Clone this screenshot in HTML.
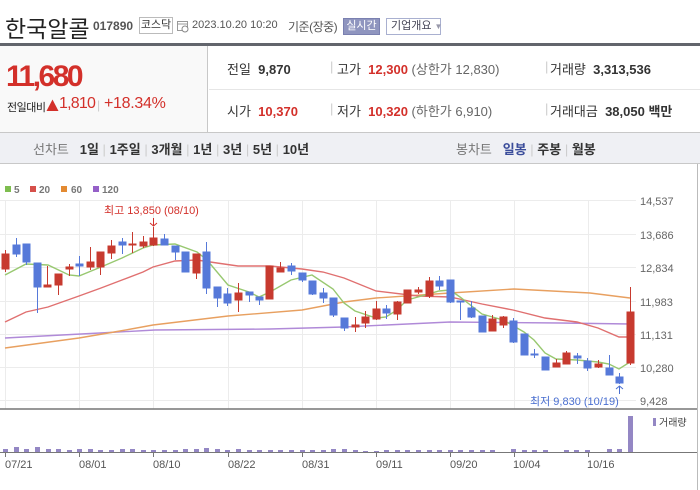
<!DOCTYPE html>
<html><head><meta charset="utf-8"><style>
*{margin:0;padding:0;box-sizing:border-box}
body{width:700px;height:490px;background:#fff;font-family:"Liberation Sans","Noto Sans CJK KR",sans-serif;position:relative;overflow:hidden;color:#333}
.a{position:absolute;white-space:nowrap}
.red{color:#d3302a}
.b{font-weight:bold}
</style></head><body>
<div class="a" style="left:5px;top:10px;font-size:23px;color:#222;letter-spacing:0px">한국알콜</div>
<div class="a b" style="left:93px;top:19px;font-size:12px;color:#555">017890</div>
<div class="a" style="left:139px;top:17px;width:34px;height:17px;border:1px solid #bbb;font-size:11px;color:#333;text-align:center;line-height:15px">코스닥</div>
<svg class="a" style="left:177px;top:19px" width="12" height="14"><rect x="0.5" y="2.5" width="10" height="9" fill="none" stroke="#999"/><line x1="0" y1="5" x2="11" y2="5" stroke="#999"/><circle cx="8" cy="10" r="3" fill="#fff" stroke="#888"/></svg>
<div class="a" style="left:192px;top:19px;font-size:11px;color:#555">2023.10.20 10:20</div>
<div class="a" style="left:288px;top:18px;font-size:12px;color:#555;letter-spacing:-0.5px">기준(장중)</div>
<div class="a" style="left:343px;top:18px;width:37px;height:17px;background:#8f95bf;border:1px solid #7a80b0;color:#fff;font-size:11px;text-align:center;line-height:15px">실시간</div>
<div class="a" style="left:386px;top:18px;width:55px;height:17px;border:1px solid #a9b0d0;color:#445;font-size:11px;line-height:15px;padding-left:4px">기업개요 <span style="color:#99a;font-size:8px">▼</span></div>
<div class="a" style="left:0;top:43px;width:700px;height:3px;background:#62656c"></div>
<div class="a" style="left:0;top:46px;width:208px;height:86px;background:#f9f9f9;border-right:1px solid #c8c8c8"></div>
<div class="a" style="left:209px;top:89px;width:491px;height:1px;background:#e6e6e6"></div>
<div class="a b red" style="left:6px;top:60px;font-size:30px;letter-spacing:-2.5px">11,680</div>
<div class="a" style="left:7px;top:99px;font-size:11px;color:#222;letter-spacing:-0.5px">전일대비</div>
<svg class="a" style="left:46px;top:99px" width="13" height="13"><polygon points="6.5,0.5 12.5,12 0.5,12" fill="#d3302a"/></svg>
<div class="a red" style="left:59px;top:95px;font-size:16px;letter-spacing:-0.8px">1,810</div>
<div class="a" style="left:97px;top:98px;font-size:12px;color:#ccc">|</div>
<div class="a red" style="left:104px;top:95px;font-size:16px;letter-spacing:-0.3px">+18.34%</div>
<div class="a" style="left:227px;top:59px;font-size:13px;color:#333">전일 &nbsp;<b>9,870</b></div>
<div class="a" style="left:330px;top:59px;font-size:13px;color:#ccc">|</div>
<div class="a" style="left:337px;top:59px;font-size:13px;color:#333">고가 &nbsp;<b class="red">12,300</b> <span style="color:#666">(상한가 12,830)</span></div>
<div class="a" style="left:545px;top:59px;font-size:13px;color:#ccc">|</div>
<div class="a" style="left:550px;top:59px;font-size:13px;color:#333">거래량 &nbsp;<b>3,313,536</b></div>
<div class="a" style="left:227px;top:101px;font-size:13px;color:#333">시가 &nbsp;<b class="red">10,370</b></div>
<div class="a" style="left:330px;top:101px;font-size:13px;color:#ccc">|</div>
<div class="a" style="left:337px;top:101px;font-size:13px;color:#333">저가 &nbsp;<b class="red">10,320</b> <span style="color:#666">(하한가 6,910)</span></div>
<div class="a" style="left:545px;top:101px;font-size:13px;color:#ccc">|</div>
<div class="a" style="left:550px;top:101px;font-size:13px;color:#333">거래대금 &nbsp;<b>38,050</b> <b>백만</b></div>
<div class="a" style="left:0;top:132px;width:700px;height:32px;background:#eff0f4;border-top:1px solid #c8c8c8;border-bottom:1px solid #c8c8c8"></div>
<div class="a" style="left:33px;top:139px;font-size:13px;color:#777">선차트 &nbsp;&nbsp;<b style="color:#333">1일</b> <span style="color:#ccc">|</span> <b style="color:#333">1주일</b> <span style="color:#ccc">|</span> <b style="color:#333">3개월</b> <span style="color:#ccc">|</span> <b style="color:#333">1년</b> <span style="color:#ccc">|</span> <b style="color:#333">3년</b> <span style="color:#ccc">|</span> <b style="color:#333">5년</b> <span style="color:#ccc">|</span> <b style="color:#333">10년</b></div>
<div class="a" style="left:456px;top:139px;font-size:13px;color:#777">봉차트 &nbsp;&nbsp;<b style="color:#3a4c9a">일봉</b> <span style="color:#ccc">|</span> <b style="color:#333">주봉</b> <span style="color:#ccc">|</span> <b style="color:#333">월봉</b></div>
<div class="a" style="left:697px;top:164px;width:1px;height:326px;background:#bbb"></div>
<svg class="a" style="left:0;top:164px" width="697" height="326" viewBox="0 164 697 326" font-family="Liberation Sans,Noto Sans CJK KR,sans-serif">
<g font-size="10" font-weight="bold" fill="#777">
<rect x="5" y="186" width="6" height="6" fill="#7ebd4f"/><text x="14" y="193">5</text>
<rect x="30" y="186" width="6" height="6" fill="#d6504a"/><text x="39" y="193">20</text>
<rect x="61" y="186" width="6" height="6" fill="#e38a32"/><text x="71" y="193">60</text>
<rect x="93" y="186" width="6" height="6" fill="#9560c8"/><text x="102" y="193">120</text>
</g>
<g stroke="#ececec" stroke-width="1">
<line x1="0" y1="200.5" x2="636" y2="200.5"/><line x1="0" y1="234.5" x2="636" y2="234.5"/><line x1="0" y1="267.5" x2="636" y2="267.5"/><line x1="0" y1="301.5" x2="636" y2="301.5"/><line x1="0" y1="334.5" x2="636" y2="334.5"/><line x1="0" y1="367.5" x2="636" y2="367.5"/><line x1="0" y1="400.5" x2="636" y2="400.5"/>
<line x1="5.5" y1="200" x2="5.5" y2="409"/><line x1="79.5" y1="200" x2="79.5" y2="409"/><line x1="153.5" y1="200" x2="153.5" y2="409"/><line x1="228.5" y1="200" x2="228.5" y2="409"/><line x1="302.5" y1="200" x2="302.5" y2="409"/><line x1="376.5" y1="200" x2="376.5" y2="409"/><line x1="450.5" y1="200" x2="450.5" y2="409"/><line x1="514.5" y1="200" x2="514.5" y2="409"/><line x1="588.5" y1="200" x2="588.5" y2="409"/>
</g>
<g font-size="11" fill="#666">
<text x="640" y="205">14,537</text><text x="640" y="239">13,686</text><text x="640" y="272">12,834</text><text x="640" y="306">11,983</text><text x="640" y="339">11,131</text><text x="640" y="372">10,280</text><text x="640" y="405">9,428</text>
</g>
<g fill="none" stroke-width="1.4">
<polyline stroke="#b08ad8" points="5,338 100,333 155,330 270,329 344,327 450,322 560,323 630,324"/>
<polyline stroke="#e8a060" points="5,348 79,338 120,331 153,325 228,316 302,310 344,302 376,298 450,293 514,289 590,293 630,298"/>
<polyline stroke="#e07070" points="5,322 26,312 48,307 79,296 101,288 122,280 143,272 153,267 175,261 197,260 217,263 238,266 270,266 302,269 323,272 344,278 376,291 418,296 450,297 482,304 513,310 545,318 577,322 598,328 619,337 630,337"/>
<polyline stroke="#98c870" points="5,275 26,264 48,265 69,275 79,276 101,267 122,258 143,248 153,245 175,244 197,252 207,260 228,285 249,292 259,297 270,292 291,280 312,275 333,289 344,303 355,311 376,318 386,317 397,310 407,300 418,297 439,291 450,290 460,297 482,314 503,320 524,332 534,340 545,353 556,359 577,360 598,362 609,364 619,369 630,362"/>
</g>
<g stroke-width="1">
<g stroke="#c73a2f" fill="#c73a2f">
<line x1="5.5" y1="250" x2="5.5" y2="272"/><rect x="2" y="254" width="7" height="15"/>
<line x1="47.5" y1="266" x2="47.5" y2="287"/><rect x="44" y="285" width="7" height="2"/>
<line x1="58.5" y1="274" x2="58.5" y2="295"/><rect x="55" y="274" width="7" height="11"/>
<line x1="69.5" y1="264" x2="69.5" y2="276"/><rect x="66" y="267" width="7" height="2"/>
<line x1="90.5" y1="247" x2="90.5" y2="270"/><rect x="87" y="262" width="7" height="5"/>
<line x1="100.5" y1="252" x2="100.5" y2="275"/><rect x="97" y="252" width="7" height="15"/>
<line x1="111.5" y1="240" x2="111.5" y2="259"/><rect x="108" y="246" width="7" height="7"/>
<line x1="132.5" y1="232" x2="132.5" y2="253"/><rect x="129" y="244" width="7" height="1"/>
<line x1="143.5" y1="236" x2="143.5" y2="248"/><rect x="140" y="242" width="7" height="4"/>
<line x1="153.5" y1="227" x2="153.5" y2="246"/><rect x="150" y="238" width="7" height="7"/>
<line x1="196.5" y1="254" x2="196.5" y2="279"/><rect x="193" y="254" width="7" height="19"/>
<line x1="238.5" y1="283" x2="238.5" y2="312"/><rect x="235" y="293" width="7" height="7"/>
<rect x="266" y="266" width="7" height="33"/>
<line x1="280.5" y1="262" x2="280.5" y2="272"/><rect x="277" y="268" width="7" height="4"/>
<line x1="355.5" y1="317" x2="355.5" y2="332"/><rect x="352" y="325" width="7" height="2"/>
<line x1="365.5" y1="311" x2="365.5" y2="328"/><rect x="362" y="317" width="7" height="6"/>
<line x1="376.5" y1="301" x2="376.5" y2="320"/><rect x="373" y="309" width="7" height="10"/>
<line x1="397.5" y1="301" x2="397.5" y2="320"/><rect x="394" y="302" width="7" height="12"/>
<line x1="407.5" y1="290" x2="407.5" y2="303"/><rect x="404" y="290" width="7" height="13"/>
<line x1="418.5" y1="287" x2="418.5" y2="294"/><rect x="415" y="290" width="7" height="2"/>
<line x1="429.5" y1="277" x2="429.5" y2="298"/><rect x="426" y="281" width="7" height="15"/>
<line x1="492.5" y1="315" x2="492.5" y2="331"/><rect x="489" y="319" width="7" height="12"/>
<line x1="503.5" y1="316" x2="503.5" y2="328"/><rect x="500" y="317" width="7" height="8"/>
<line x1="556.5" y1="359" x2="556.5" y2="367"/><rect x="553" y="363" width="7" height="4"/>
<line x1="566.5" y1="351" x2="566.5" y2="364"/><rect x="563" y="353" width="7" height="11"/>
<line x1="598.5" y1="360" x2="598.5" y2="368"/><rect x="595" y="364" width="7" height="3"/>
<line x1="630.5" y1="287" x2="630.5" y2="365"/><rect x="627" y="312" width="7" height="51"/>
</g>
<g stroke="#5679d9" fill="#5679d9">
<line x1="16.5" y1="238" x2="16.5" y2="257"/><rect x="13" y="245" width="7" height="9"/>
<line x1="26.5" y1="244" x2="26.5" y2="265"/><rect x="23" y="244" width="7" height="18"/>
<line x1="37.5" y1="263" x2="37.5" y2="313"/><rect x="34" y="263" width="7" height="24"/>
<line x1="79.5" y1="256" x2="79.5" y2="276"/><rect x="76" y="264" width="7" height="2"/>
<line x1="122.5" y1="238" x2="122.5" y2="254"/><rect x="119" y="242" width="7" height="3"/>
<line x1="164.5" y1="234" x2="164.5" y2="245"/><rect x="161" y="239" width="7" height="6"/>
<line x1="175.5" y1="246" x2="175.5" y2="260"/><rect x="172" y="246" width="7" height="6"/>
<rect x="182" y="252" width="7" height="20"/>
<line x1="206.5" y1="242" x2="206.5" y2="294"/><rect x="203" y="252" width="7" height="36"/>
<line x1="217.5" y1="287" x2="217.5" y2="307"/><rect x="214" y="287" width="7" height="11"/>
<line x1="227.5" y1="288" x2="227.5" y2="306"/><rect x="224" y="294" width="7" height="9"/>
<line x1="249.5" y1="292" x2="249.5" y2="302"/><rect x="246" y="292" width="7" height="3"/>
<line x1="259.5" y1="297" x2="259.5" y2="305"/><rect x="256" y="297" width="7" height="3"/>
<line x1="291.5" y1="263" x2="291.5" y2="275"/><rect x="288" y="266" width="7" height="5"/>
<line x1="302.5" y1="273" x2="302.5" y2="282"/><rect x="299" y="273" width="7" height="7"/>
<line x1="312.5" y1="281" x2="312.5" y2="295"/><rect x="309" y="281" width="7" height="13"/>
<line x1="323.5" y1="288" x2="323.5" y2="303"/><rect x="320" y="293" width="7" height="5"/>
<line x1="333.5" y1="298" x2="333.5" y2="317"/><rect x="330" y="298" width="7" height="17"/>
<line x1="344.5" y1="318" x2="344.5" y2="331"/><rect x="341" y="318" width="7" height="10"/>
<line x1="386.5" y1="305" x2="386.5" y2="319"/><rect x="383" y="309" width="7" height="4"/>
<line x1="439.5" y1="276" x2="439.5" y2="290"/><rect x="436" y="281" width="7" height="5"/>
<line x1="450.5" y1="280" x2="450.5" y2="303"/><rect x="447" y="280" width="7" height="22"/>
<line x1="460.5" y1="301" x2="460.5" y2="320"/><rect x="457" y="301" width="7" height="1"/>
<line x1="471.5" y1="301" x2="471.5" y2="318"/><rect x="468" y="308" width="7" height="9"/>
<rect x="479" y="316" width="7" height="16"/>
<line x1="513.5" y1="318" x2="513.5" y2="343"/><rect x="510" y="321" width="7" height="21"/>
<rect x="521" y="334" width="7" height="21"/>
<line x1="534.5" y1="349" x2="534.5" y2="358"/><rect x="531" y="354" width="7" height="1"/>
<rect x="542" y="357" width="7" height="13"/>
<line x1="577.5" y1="353" x2="577.5" y2="364"/><rect x="574" y="356" width="7" height="2"/>
<line x1="587.5" y1="358" x2="587.5" y2="371"/><rect x="584" y="361" width="7" height="7"/>
<line x1="609.5" y1="355" x2="609.5" y2="375"/><rect x="606" y="368" width="7" height="7"/>
<line x1="619.5" y1="373" x2="619.5" y2="384"/><rect x="616" y="377" width="7" height="6"/>
</g>
</g>
<text x="104" y="214" font-size="11" fill="#d3302a">최고 13,850 (08/10)</text>
<path d="M153.5 218 V226 M150 223 L153.5 226 L157 223" stroke="#d3302a" fill="none"/>
<path d="M619.5 394 V386 M616 389 L619.5 386 L623 389" stroke="#4a6fd0" fill="none"/>
<text x="530" y="405" font-size="11" fill="#4a6fd0">최저 9,830 (10/19)</text>
<line x1="0" y1="409" x2="697" y2="409" stroke="#777" stroke-width="1.5"/>
<line x1="0" y1="452.5" x2="697" y2="452.5" stroke="#777"/>
<g fill="#9487c4">
<rect x="3" y="449" width="5" height="3"/><rect x="14" y="447" width="5" height="5"/><rect x="24" y="449" width="5" height="3"/><rect x="35" y="447" width="5" height="5"/><rect x="46" y="449" width="5" height="3"/><rect x="56" y="449" width="5" height="3"/><rect x="67" y="450" width="5" height="2"/><rect x="77" y="449" width="5" height="3"/><rect x="88" y="449" width="5" height="3"/><rect x="98" y="450" width="5" height="2"/><rect x="109" y="450" width="5" height="2"/><rect x="120" y="449" width="5" height="3"/><rect x="130" y="449" width="5" height="3"/><rect x="141" y="450" width="5" height="2"/><rect x="151" y="450" width="5" height="2"/><rect x="162" y="450" width="5" height="2"/><rect x="173" y="450" width="5" height="2"/><rect x="183" y="449" width="5" height="3"/><rect x="194" y="449" width="5" height="3"/><rect x="204" y="448" width="5" height="4"/><rect x="215" y="449" width="5" height="3"/><rect x="225" y="450" width="5" height="2"/><rect x="236" y="449" width="5" height="3"/><rect x="247" y="450" width="5" height="2"/><rect x="257" y="450" width="5" height="2"/><rect x="268" y="450" width="5" height="2"/><rect x="278" y="450" width="5" height="2"/><rect x="289" y="450" width="5" height="2"/><rect x="300" y="450" width="5" height="2"/><rect x="310" y="450" width="5" height="2"/><rect x="321" y="450" width="5" height="2"/><rect x="331" y="449" width="5" height="3"/><rect x="342" y="449" width="5" height="3"/><rect x="353" y="450" width="5" height="2"/><rect x="363" y="451" width="5" height="1"/><rect x="374" y="451" width="5" height="1"/><rect x="384" y="450" width="5" height="2"/><rect x="395" y="450" width="5" height="2"/><rect x="405" y="450" width="5" height="2"/><rect x="416" y="450" width="5" height="2"/><rect x="427" y="450" width="5" height="2"/><rect x="437" y="450" width="5" height="2"/><rect x="448" y="450" width="5" height="2"/><rect x="458" y="450" width="5" height="2"/><rect x="469" y="450" width="5" height="2"/><rect x="480" y="450" width="5" height="2"/><rect x="490" y="450" width="5" height="2"/><rect x="511" y="449" width="5" height="3"/><rect x="522" y="450" width="5" height="2"/><rect x="532" y="450" width="5" height="2"/><rect x="543" y="450" width="5" height="2"/><rect x="564" y="450" width="5" height="2"/><rect x="574" y="450" width="5" height="2"/><rect x="585" y="450" width="5" height="2"/><rect x="607" y="449" width="5" height="3"/><rect x="617" y="449" width="5" height="3"/><rect x="628" y="416" width="5" height="36"/>
<rect x="653" y="418" width="3" height="8"/>
</g>
<text x="659" y="426" font-size="10" fill="#444">거래량</text>
<g stroke="#777"><line x1="5.5" y1="452" x2="5.5" y2="457"/><line x1="79.5" y1="452" x2="79.5" y2="457"/><line x1="153.5" y1="452" x2="153.5" y2="457"/><line x1="228.5" y1="452" x2="228.5" y2="457"/><line x1="302.5" y1="452" x2="302.5" y2="457"/><line x1="376.5" y1="452" x2="376.5" y2="457"/><line x1="450.5" y1="452" x2="450.5" y2="457"/><line x1="514.5" y1="452" x2="514.5" y2="457"/><line x1="588.5" y1="452" x2="588.5" y2="457"/></g>
<g font-size="11" fill="#555">
<text x="5" y="468">07/21</text><text x="79" y="468">08/01</text><text x="153" y="468">08/10</text><text x="228" y="468">08/22</text><text x="302" y="468">08/31</text><text x="376" y="468">09/11</text><text x="450" y="468">09/20</text><text x="513" y="468">10/04</text><text x="587" y="468">10/16</text>
</g>
</svg>
</body></html>
